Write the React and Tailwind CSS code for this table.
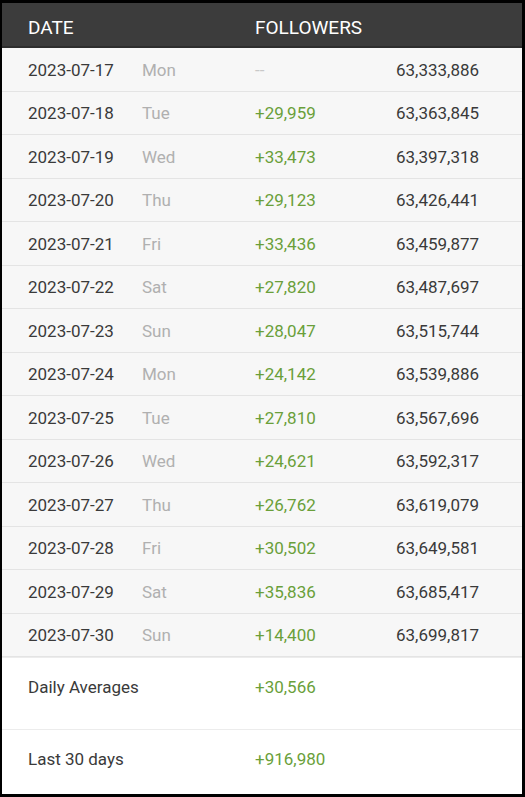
import React from "react";

const rows = [
  ["2023-07-17", "Mon", "--", "63,333,886"],
  ["2023-07-18", "Tue", "+29,959", "63,363,845"],
  ["2023-07-19", "Wed", "+33,473", "63,397,318"],
  ["2023-07-20", "Thu", "+29,123", "63,426,441"],
  ["2023-07-21", "Fri", "+33,436", "63,459,877"],
  ["2023-07-22", "Sat", "+27,820", "63,487,697"],
  ["2023-07-23", "Sun", "+28,047", "63,515,744"],
  ["2023-07-24", "Mon", "+24,142", "63,539,886"],
  ["2023-07-25", "Tue", "+27,810", "63,567,696"],
  ["2023-07-26", "Wed", "+24,621", "63,592,317"],
  ["2023-07-27", "Thu", "+26,762", "63,619,079"],
  ["2023-07-28", "Fri", "+30,502", "63,649,581"],
  ["2023-07-29", "Sat", "+35,836", "63,685,417"],
  ["2023-07-30", "Sun", "+14,400", "63,699,817"],
];

const App = () => {
  return (
    <div className="w-[525px] h-[797px] bg-black pt-[3px] pl-[2px] pr-[3px] pb-[3px] font-['Roboto',sans-serif]">
      <div className="h-full bg-white overflow-hidden">
        {/* Header */}
        <div className="h-[45px] bg-[#3c3c3c] border-b-2 border-[#2e2e2e] flex items-center pt-[7px] text-white text-[19px]">
          <span className="pl-[26px] w-[253px]">DATE</span>
          <span>FOLLOWERS</span>
        </div>

        {/* Daily rows */}
        {rows.map(([date, day, change, total]) => (
          <div
            key={date}
            className="h-[43.5px] bg-[#f7f7f7] border-b border-[#e4e4e4] flex items-center pt-[2px] text-[17px]"
          >
            <span className="pl-[26px] w-[140px] text-[#3a3a3a]">{date}</span>
            <span className="w-[113px] text-[#b0b0b0]">{day}</span>
            <span className={`w-[141px] ${change === "--" ? "text-[#c8c8c8]" : "text-[#6a9f3a]"}`}>{change}</span>
            <span className="text-[#3a3a3a]">{total}</span>
          </div>
        ))}

        {/* Summary */}
        <div className="h-[73px] border-t border-[#ececec] border-b flex items-start pt-[17px] text-[17px]">
          <span className="pl-[26px] w-[253px] text-[#3a3a3a]">Daily Averages</span>
          <span className="text-[#6a9f3a]">+30,566</span>
        </div>
        <div className="h-[72px] flex items-start pt-[17px] text-[17px]">
          <span className="pl-[26px] w-[253px] text-[#3a3a3a]">Last 30 days</span>
          <span className="text-[#6a9f3a]">+916,980</span>
        </div>
      </div>
    </div>
  );
};

export default App;
